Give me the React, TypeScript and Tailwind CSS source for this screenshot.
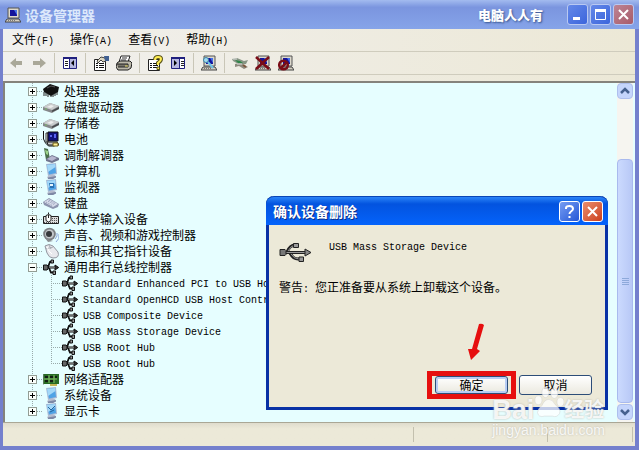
import { useState } from 'react'
import type { ReactNode } from 'react'

type IconName =
    | 'chip' | 'disk' | 'battery' | 'modem' | 'computer' | 'monitor' | 'keyboard'
    | 'hid' | 'sound' | 'mouse' | 'usb' | 'network' | 'display'

type Device = { name: string; icon: IconName; children?: string[] }

const devices: Device[] = [
    { name: '处理器', icon: 'chip' },
    { name: '磁盘驱动器', icon: 'disk' },
    { name: '存储卷', icon: 'disk' },
    { name: '电池', icon: 'battery' },
    { name: '调制解调器', icon: 'modem' },
    { name: '计算机', icon: 'computer' },
    { name: '监视器', icon: 'monitor' },
    { name: '键盘', icon: 'keyboard' },
    { name: '人体学输入设备', icon: 'hid' },
    { name: '声音、视频和游戏控制器', icon: 'sound' },
    { name: '鼠标和其它指针设备', icon: 'mouse' },
    {
        name: '通用串行总线控制器',
        icon: 'usb',
        children: [
            'Standard Enhanced PCI to USB Host Controller',
            'Standard OpenHCD USB Host Controller',
            'USB Composite Device',
            'USB Mass Storage Device',
            'USB Root Hub',
            'USB Root Hub',
        ],
    },
    { name: '网络适配器', icon: 'network' },
    { name: '系统设备', icon: 'computer' },
    { name: '显示卡', icon: 'display' },
]

const menus = [
    { label: '文件', hotkey: 'F' },
    { label: '操作', hotkey: 'A' },
    { label: '查看', hotkey: 'V' },
    { label: '帮助', hotkey: 'H' },
]

const latin = "font-['Liberation_Mono','Noto_Sans_CJK_SC',monospace] text-[10px]"

function ScreenShape() {
    return (
        <>
            <path d="M3 1 13 0 14 11 5 13Z" fill="#a9b9d4" />
            <path d="M4 2 12 1 13 10 6 11.500Z" fill="#4ea3e6" />
            <path d="M4 2 12 1 12.500 4 5 9Z" fill="#a3d8f8" />
            <path d="M7 12h5l1 2-3 2H5l-1-2Z" fill="#b5bccd" />
            <path d="M5 14.500 13 13v1.500L10 16H5Z" fill="#7d88a5" />
        </>
    )
}

function UsbShape() {
    return (
        <>
            <path d="M3 8.500h10M5 8l2-5h2M6 9l2 4.500h3" fill="none" stroke="#111" strokeWidth="1.800" />
            <path d="M0.500 6h3.500l1 1v3l-1 1H0.500Z" fill="#666" stroke="#111" />
            <path d="M12 6 15.700 8.500 12 11Z" fill="#333" stroke="#111" />
            <path d="M8 1h2.500v3H8Z" fill="#999" stroke="#111" />
            <path d="M10 12h2.500v3.500H10Z" fill="#999" stroke="#111" />
            <path d="M6 8.500h6" stroke="#888" strokeWidth="0.800" />
        </>
    )
}

const shapes: Record<IconName, ReactNode> = {
    chip: (
        <>
            <path d="M0 6 7 1l9 3-1 5-7 4-7-4Z" fill="#111" />
            <path d="M1 9v4M3 10v3M5 11v3M8 12v2M10 11v3M12 10v3M14 9v3" stroke="#222" />
            <path d="m4 5 4-2 4 1" stroke="#555" fill="none" />
        </>
    ),
    disk: (
        <>
            <path d="M0 8 7 4l9 3v3l-7 4-9-3Z" fill="#85888b" />
            <path d="M0 8 7 4l9 3-7 4Z" fill="#c9cccd" />
            <path d="m4 8 4-2 3 1-3 2Z" fill="#eee" />
            <path d="M9 11.500 16 8v2l-7 3Z" fill="#474a4d" />
            <path d="M2 10h2" stroke="#7cba68" />
        </>
    ),
    battery: (
        <>
            <path d="M0.500 0v8l2 4 3 3h6" fill="none" stroke="#111" />
            <path d="M3 2h2v9H3Z" fill="#f5f5f5" stroke="#333" />
            <path d="M5 1h10v9H5Z" fill="#10127e" stroke="#111" />
            <path d="M7 4h2v2H7M11 3h2v4h-2" fill="#5964ef" />
            <path d="M4 11h10l2 3H5Z" fill="#c9c9c9" stroke="#222" />
            <path d="M10 12h5v3h-5Z" fill="#fff09a" stroke="#6f6317" />
        </>
    ),
    modem: (
        <>
            <path d="m1 1 4 1 2 10-4 1Z" fill="#4b6f4a" />
            <path d="m2 3 3 1v4L3 7Z" fill="#9cd58b" />
            <path d="m3 12 6-4 7 3v2l-7 3-6-2Z" fill="#71758f" />
            <path d="m4 12 5-3 5 2-5 3Z" fill="#b7b7cf" />
        </>
    ),
    computer: <ScreenShape />,
    monitor: (
        <>
            <ScreenShape />
            <path d="M6 4h5v5H7Z" fill="#2a72b5" />
            <path d="M7 5h3v2H7Z" fill="#e6f6ff" />
        </>
    ),
    display: (
        <>
            <ScreenShape />
            <path d="m5 4 3 3 4-4M7 9l4-2" stroke="#27659c" fill="none" />
        </>
    ),
    keyboard: (
        <>
            <path d="m0 7 6-4 10 6-1 3-5 2L1 10Z" fill="#8c94ae" />
            <path d="m1 7 5-3 9 5-5 3Z" fill="#d9ddeb" />
            <path d="m3 7 7 4M5 6l7 4M6 5l7 4" stroke="#8d95b1" strokeDasharray="1 1" />
        </>
    ),
    hid: (
        <>
            <path d="M0.500 5.500h15v7h-15Z" fill="#ddd" stroke="#222" />
            <path d="M9 7.500h6M9 9.500h6M1 11.500h14" stroke="#555" strokeDasharray="1 1" />
            <path d="M3 4.500q2.500-2 5 0v5q-2.500 3-5 0Z" fill="#fff" stroke="#222" />
            <path d="M5.500 4v3M5.500 3V1.500" stroke="#222" />
        </>
    ),
    sound: (
        <>
            <circle cx="6.500" cy="7" r="6.300" fill="#7c7f83" />
            <circle cx="6.500" cy="7" r="4.500" fill="#c2c6c9" />
            <circle cx="6" cy="7" r="3" fill="#35383b" />
            <path d="m2 11 3 4 5-1" fill="#8a8d91" />
            <path d="M12 12q3-3 2-6M13 15q4-3 3-8" fill="none" stroke="#8ca6da" />
        </>
    ),
    mouse: (
        <>
            <path d="M2 3q4-3 8 0l5 6q2 6-5 6-4 0-6-5Z" fill="#e8e9ed" stroke="#92969f" />
            <path d="m3 6 7-2M6 2l2 4" stroke="#a6aab1" />
            <path d="m4 4 2 4 3 3" fill="none" stroke="#fff" />
        </>
    ),
    usb: <UsbShape />,
    network: (
        <>
            <path d="M0 3h16v10H0Z" fill="#286b25" />
            <path d="M2 5h3v2H2M7 5h3v2H7M12 5h2v2h-2M2 9h3v2H2M7 9h3v2H7" fill="#111d13" />
            <path d="M1 8h13M6 4v8M11 4v8" stroke="#83bc64" />
            <path d="M7 13h7v2H7Z" fill="#c3b553" />
            <path d="M0 3v11" stroke="#888" />
        </>
    ),
}

function DeviceIcon({ name }: { name: IconName }) {
    return <svg viewBox="0 0 16 16" className="h-4 w-4 shrink-0" aria-hidden="true">{shapes[name]}</svg>
}

// Dotted guide with the +/- box for top level rows
function Toggle({ open, last }: { open: boolean; last: boolean }) {
    return (
        <svg width="15" height="16" viewBox="0 0 15 16" shapeRendering="crispEdges" fill="none" aria-hidden="true">
            <path d={last ? 'M4.5 0V8' : 'M4.5 0V16'} stroke="#9aa" strokeDasharray="1 1" />
            <path d="M9 8.5H15" stroke="#9aa" strokeDasharray="1 1" />
            <rect x="0.5" y="4.5" width="8" height="8" fill="#fbfffb" stroke="#939d94" />
            <path d={open ? 'M2 8.5H7' : 'M2 8.5H7M4.5 6V11'} stroke="#000" />
        </svg>
    )
}

function ChildGuide({ last }: { last: boolean }) {
    return (
        <svg width="34" height="16" viewBox="0 0 34 16" shapeRendering="crispEdges" fill="none" aria-hidden="true" className="shrink-0">
            <path d={`M4.5 0V16M23.5 0V${last ? 8 : 16}M23 8.5H34`} stroke="#9aa" strokeDasharray="1 1" />
        </svg>
    )
}

function DeviceTree() {
    const [open, setOpen] = useState<Record<string, boolean>>({ 通用串行总线控制器: true })

    return (
        <ul className="min-w-0 flex-1 overflow-hidden pl-[23px]">
            {devices.map((device, index) => (
                <li key={device.name}>
                    <div className="flex h-4 items-center">
                        <button
                            aria-label={device.name}
                            aria-expanded={!!open[device.name]}
                            onClick={() => setOpen({ ...open, [device.name]: !open[device.name] })}
                        >
                            <Toggle open={!!open[device.name]} last={index === devices.length - 1} />
                        </button>
                        <DeviceIcon name={device.icon} />
                        <span className="ml-[5px] whitespace-nowrap leading-4">{device.name}</span>
                    </div>
                    {open[device.name] && device.children && (
                        <ul>
                            {device.children.map((child, i) => (
                                <li key={i} className="flex h-4 items-center">
                                    <ChildGuide last={i === device.children!.length - 1} />
                                    <DeviceIcon name="usb" />
                                    <p className="ml-[5px] whitespace-nowrap leading-4">
                                        <span className={latin}>{child}</span>
                                    </p>
                                </li>
                            ))}
                        </ul>
                    )}
                </li>
            ))}
        </ul>
    )
}

// Beige PC used by the title bar and the device actions
function PcShape() {
    return (
        <>
            <path d="M3 1h11v10H3Z" fill="#ddd9cd" stroke="#555" />
            <path d="M5 3h7v6H5Z" fill="#14149b" />
            <path d="M9 3h3v5Z" fill="#4772e8" />
            <path d="M2 12h12l2 3H0Z" fill="#d5d0c2" stroke="#444" />
            <path d="M3 13.500h8" stroke="#777" strokeDasharray="1 1" />
        </>
    )
}

const sheet = (
    <>
        <path d="M1.500 4.500h11v11h-11Z" fill="#fff" stroke="#222" />
        <path d="M3 8.500h2M6 8.500h5M3 10.500h2M6 10.500h5M3 12.500h2M6 12.500h5" stroke="#111" />
    </>
)

const tools: { label: string; shape: ReactNode }[][] = [
    [
        { label: '后退', shape: <path d="M2 8 8 3v3h6v4H8v3Z" fill="#aaa899" /> },
        { label: '前进', shape: <path d="M15 8 9 3v3H2v4h7v3Z" fill="#aaa899" /> },
    ],
    [
        {
            label: '显示/隐藏控制台树',
            shape: (
                <>
                    <path d="M1.500 2.500h13v11h-13Z" fill="#fff" stroke="#20207e" />
                    <path d="M1 3h14" stroke="#20207e" strokeWidth="2" />
                    <path d="M3 6.500h3M3 8.500h3M3 10.500h3" stroke="#222" />
                    <path d="M7 4h7v9H7Z" fill="#b6b8df" />
                    <path d="M7.500 3v10" stroke="#20207e" />
                    <path d="m12 5-3 3 3 3Z" fill="#000" />
                </>
            ),
        },
    ],
    [
        {
            label: '属性',
            shape: (
                <>
                    {sheet}
                    <path d="m4 6 4-4 4 1 1 3-3 1-2-2-3 3Z" fill="#ddd7c2" stroke="#444" />
                    <path d="M11 1h5v5h-4Z" fill="#426193" />
                </>
            ),
        },
        {
            label: '打印',
            shape: (
                <>
                    <path d="M5 1h9l-2 6H3Z" fill="#fff" stroke="#222" />
                    <path d="M6 3h5M5 5h5" stroke="#333" />
                    <path d="m1 8 3-2h10l2 2-1 5-3 2H2l-2-3Z" fill="#bbb8aa" stroke="#222" />
                    <path d="M1 9h11v3H2" fill="#77746a" stroke="#222" />
                    <path d="M9 11h3" stroke="#eee26a" />
                </>
            ),
        },
    ],
    [
        {
            label: '帮助',
            shape: (
                <>
                    {sheet}
                    <path d="M8 5q0-3 3-3t3 2-3 4v2" fill="none" stroke="#5b551b" strokeWidth="4" />
                    <path d="M8 5q0-3 3-3t3 2-3 4v2" fill="none" stroke="#ffed52" strokeWidth="2" />
                    <path d="M10 12h2.500v2.500H10Z" fill="#ffed52" stroke="#5b551b" />
                </>
            ),
        },
        {
            label: '显示/隐藏操作窗格',
            shape: (
                <>
                    <path d="M1.500 2.500h13v11h-13Z" fill="#fff" stroke="#20207e" />
                    <path d="M1 3h14" stroke="#20207e" strokeWidth="2" />
                    <path d="M2 4h7v9H2Z" fill="#b6b8df" />
                    <path d="M9.500 3v10" stroke="#20207e" />
                    <path d="M11 6.500h3M11 8.500h3M11 10.500h3" stroke="#222" />
                    <path d="m4 5 3 3-3 3Z" fill="#000" />
                </>
            ),
        },
    ],
    [
        {
            label: '扫描检测硬件改动',
            shape: (
                <>
                    <PcShape />
                    <circle cx="5" cy="5" r="2.500" fill="#a5dcf0" stroke="#3c84a8" />
                    <path d="m7 7 5 6" stroke="#71c5e7" strokeWidth="2" />
                </>
            ),
        },
    ],
    [
        {
            label: '更新驱动程序',
            shape: (
                <>
                    <path d="m0 4 5-1 7 3 4-1-2 4-6 1-7-4Z" fill="#879584" />
                    <path d="m3 5 5 1 3 2-4 1Z" fill="#2f8448" />
                    <path d="m3 9 5-1 8 4-4 2-5-3-4 1Z" fill="#8e8b7f" />
                    <path d="M1 4h4M5 9h5" stroke="#ddd" />
                    <path d="m11 10 3 2" stroke="#7c573d" strokeWidth="2" />
                </>
            ),
        },
        {
            label: '卸载',
            shape: (
                <>
                    <PcShape />
                    <path d="m1 2 13 12M14 2 1 14" stroke="#7a0d17" strokeWidth="2.500" />
                </>
            ),
        },
        {
            label: '禁用',
            shape: (
                <>
                    <PcShape />
                    <circle cx="5.500" cy="10" r="4.300" fill="none" stroke="#7a0d17" strokeWidth="2.500" />
                    <path d="m9 7-6 6" stroke="#7a0d17" strokeWidth="2.500" />
                </>
            ),
        },
    ],
]

function Toolbar() {
    return (
        <div className="flex h-[23px] items-center gap-[7px] border-b border-[#cfccbd] pl-[5px]">
            {tools.map((group, index) => (
                <div key={index} className="flex items-center gap-[7px]">
                    {index > 0 && <span className="h-5 w-px bg-[#c9c6b7]" />}
                    {group.map((tool) => (
                        <button key={tool.label} aria-label={tool.label} className="h-4 w-4">
                            <svg viewBox="0 0 16 16" className="h-4 w-4" aria-hidden="true">{tool.shape}</svg>
                        </button>
                    ))}
                </div>
            ))}
        </div>
    )
}

function ScrollButton({ label, d }: { label: string; d: string }) {
    return (
        <button aria-label={label} className="flex h-4 w-full items-center justify-center rounded-sm border border-[#aebfed] bg-[#c5d5fc]">
            <svg width="10" height="8" viewBox="0 0 10 8" fill="none" stroke="#46618f" strokeWidth="2.5" aria-hidden="true">
                <path d={d} />
            </svg>
        </button>
    )
}

function Scrollbar() {
    return (
        <div className="flex w-4 shrink-0 flex-col bg-[#f6f5f0] pb-[2px]">
            <ScrollButton label="向上滚动" d="m1 6 4-4 4 4" />
            <div className="flex flex-1 flex-col pt-[60px] pb-px">
                <div className="flex flex-1 flex-col items-center justify-center gap-px rounded-sm border border-[#a9baee] bg-linear-to-r from-[#cbdafe] to-[#b8c8f6]">
                    {[0, 1, 2, 3].map((n) => (
                        <span key={n} className="h-px w-[7px] bg-[#8da9da]" />
                    ))}
                </div>
            </div>
            <ScrollButton label="向下滚动" d="m1 2 4 4 4-4" />
        </div>
    )
}

function TitleBar() {
    const control = 'flex h-[21px] w-[21px] items-center justify-center rounded-[3px] border border-[#b9c9f2]'

    return (
        <header className="flex h-[29px] shrink-0 items-center bg-linear-to-b from-[#a3bbef] via-[#7b95df] via-25% to-[#86a4e9] pr-[5px] pl-[5px]">
            <svg viewBox="0 0 16 16" className="h-4 w-4" aria-hidden="true"><PcShape /></svg>
            <h1 className="ml-1 text-[14px] leading-5 font-bold text-[#dce8fb]">设备管理器</h1>
            <span className="mr-6 ml-auto text-[13px] leading-5 font-black text-white [text-shadow:1px_1px_2px_#35538c]">电脑人人有</span>
            <div className="flex gap-[2px]">
                <button aria-label="最小化" className={`${control} bg-linear-to-br from-[#6488e8] to-[#3c65dc]`}>
                    <svg width="13" height="13" aria-hidden="true"><path d="M2 9h7v3H2Z" fill="#fff" /></svg>
                </button>
                <button aria-label="最大化" className={`${control} bg-linear-to-br from-[#6488e8] to-[#3c65dc]`}>
                    <svg width="13" height="13" aria-hidden="true">
                        <path d="M1.500 2.500h10v9h-10Z" fill="none" stroke="#fff" />
                        <path d="M1 2.500h11" stroke="#fff" strokeWidth="3" />
                    </svg>
                </button>
                <button aria-label="关闭" className={`${control} bg-linear-to-br from-[#bd8495] to-[#a85b69]`}>
                    <svg width="13" height="13" aria-hidden="true"><path d="m2 2 9 9M11 2l-9 9" stroke="#fff" strokeWidth="2" /></svg>
                </button>
            </div>
        </header>
    )
}

function ConfirmDialog() {
    const control = 'flex h-[21px] w-[21px] items-center justify-center rounded-[3px] border border-white'
    const action = 'w-[73px] rounded-[3px] border border-[#2c4d78] bg-linear-to-b from-white to-[#ebe9df] text-center leading-4'

    return (
        <section
            role="dialog"
            aria-labelledby="dialog-title"
            className="absolute top-[196px] left-[266px] w-[342px] rounded-t-lg border-x-[3px] border-b-[3px] border-[#0831a5] bg-[#ece9d8]"
        >
            <div className="-mx-[3px] flex h-[29px] items-center gap-[2px] rounded-t-lg border-t border-[#0a45b5] bg-linear-to-b from-[#2a83f8] via-[#0353df] via-25% to-[#0463fb] pr-[5px] pl-[7px]">
                <h2 id="dialog-title" className="mr-auto text-[14px] leading-5 font-bold text-white [text-shadow:1px_1px_#0c2e86]">确认设备删除</h2>
                <button aria-label="帮助" className={`${control} bg-linear-to-br from-[#769cf2] to-[#2455d6]`}>
                    <svg width="13" height="15" fill="none" stroke="#fff" strokeWidth="2" aria-hidden="true">
                        <path d="M3 5V4q0-2 3.500-2T10 5q0 1-2 2.500Q6.500 8.500 6.500 10M6.500 12v2" />
                    </svg>
                </button>
                <button aria-label="关闭" className={`${control} bg-linear-to-br from-[#e98c6c] to-[#cb3d19]`}>
                    <svg width="13" height="13" aria-hidden="true"><path d="m2 2 9 9M11 2l-9 9" stroke="#fff" strokeWidth="2" /></svg>
                </button>
            </div>
            <div className="px-[10px] pt-3 pb-2">
                <div className="flex items-start">
                    <svg viewBox="0 0 33 22" className="mt-1 h-[22px] w-[33px]" aria-hidden="true">
                        <path d="M5 11.500h23M8 11q3-7 8-7h2M11 12q3 6 8 6h3" fill="none" stroke="#222" strokeWidth="3" />
                        <path d="M7 11.500h20M9 10q3-5.500 7-6M12 13q3 5 8 5" fill="none" stroke="#999" strokeWidth="1" />
                        <path d="M1 8.500h5l1 1v4l-1 1H1Z" fill="#777" stroke="#222" />
                        <path d="M26 8 32 11.500 26 15Z" fill="#888" stroke="#222" />
                        <path d="M14.500 2.500h5v4h-5Z" fill="#999" stroke="#222" />
                        <path d="M20 16h4.500v4.500H20Z" fill="#999" stroke="#222" />
                    </svg>
                    <p className="ml-[17px] leading-4">
                        <span className={latin}>USB Mass Storage Device</span>
                    </p>
                </div>
                <p className="mt-4 leading-4">
                    警告<span className={`whitespace-pre ${latin}`}>: </span>您正准备要从系统上卸载这个设备。
                </p>
                <div className="mt-[73px] flex items-center justify-end gap-[3px] pr-[3px]">
                    <span className="flex border-[5px] border-[#e60f0f] px-[3px]">
                        <button className={`h-[18px] shadow-[inset_0_0_0_2px_#b8cdf4] ${action}`}>确定</button>
                    </span>
                    <button className={`h-5 ${action}`}>取消</button>
                </div>
            </div>
            <svg className="absolute top-[126px] left-[196px] h-10 w-6" viewBox="0 0 24 40" aria-hidden="true">
                <path d="M14 2q3-1 5 1l-7 24 3 2-9 9-3-11 4 0Z" fill="#e60f0f" />
            </svg>
        </section>
    )
}

function Watermark() {
    return (
        <div className="pointer-events-none absolute right-[34px] bottom-[12px] flex flex-col items-start font-['Liberation_Sans','Noto_Sans_CJK_SC',sans-serif] text-white/85 [text-shadow:0_0_2px_#b5b3a8]">
            <div className="flex items-center">
                <span className="text-[27px] leading-6 font-bold">Bai</span>
                <svg viewBox="0 0 34 36" className="-mt-4 h-9 w-[30px]" aria-hidden="true">
                    <g fill="#fff" fillOpacity="0.75" stroke="#ccc" strokeWidth="0.5">
                        <ellipse cx="5" cy="16" rx="4" ry="5" />
                        <ellipse cx="13" cy="7" rx="4" ry="6" />
                        <ellipse cx="23" cy="8" rx="4" ry="6" />
                        <ellipse cx="30" cy="18" rx="4" ry="5" />
                        <path d="M17 15q4 0 7 6 7 5 5 10-3 5-8 3H12q-7 2-8-4 0-4 5-8 3-7 8-7Z" />
                    </g>
                </svg>
                <span className="text-[20px] leading-6 font-bold">经验</span>
            </div>
            <span className="text-[14px] leading-4">jingyan.baidu.com</span>
        </div>
    )
}

export default function App() {
    return (
        <div className="relative flex min-h-screen flex-col overflow-hidden bg-[#7480cd] font-['Noto_Sans_CJK_SC',sans-serif] text-[12px] text-black">
            <TitleBar />
            <main className="mr-1 mb-1 ml-[3px] flex flex-1 flex-col bg-linear-to-r from-[#f1f0ee] to-[#ece8d6]">
                <nav className="flex h-[23px] items-center gap-4 border-b border-[#cfccbd] pl-[9px]">
                    {menus.map((menu) => (
                        <button key={menu.label} className="leading-4">
                            {menu.label}
                            <span className={latin}>({menu.hotkey})</span>
                        </button>
                    ))}
                </nav>
                <Toolbar />
                <div className="mt-[6px] flex flex-1 border-t-2 border-l-2 border-[#85837c] bg-[#e6feff] pr-[2px]">
                    <DeviceTree />
                    <Scrollbar />
                </div>
                <footer className="flex h-6 border-t border-[#aaa795] bg-linear-to-b from-[#dfdccd] via-[#ece9d8] via-25% to-[#ece9d8] py-1">
                    <span className="flex-1 border-r border-[#c3c0ae]" />
                    <span className="w-[134px] border-r border-[#c3c0ae]" />
                    <span className="mr-[2px] w-[85px] border-r border-[#c3c0ae]" />
                </footer>
            </main>
            <ConfirmDialog />
            <Watermark />
        </div>
    )
}
